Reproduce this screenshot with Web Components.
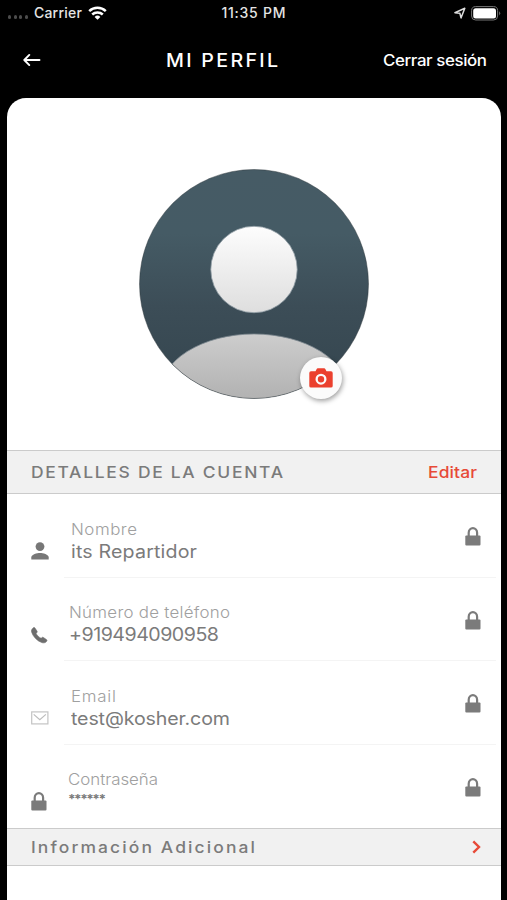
<!DOCTYPE html>
<html lang="es">
<head>
<meta charset="utf-8">
<title>Mi perfil</title>
<style>
body{margin:0;background:#000;font-family:Inter,"Liberation Sans",sans-serif;overflow:hidden}
</style>
</head>
<body>
<profile-screen></profile-screen>
<script>
const define=(name,html,setup)=>customElements.define(name,class extends HTMLElement{
  connectedCallback(){
    if(this.shadowRoot)return;
    const t=document.createElement('template');
    t.innerHTML=typeof html==='function'?html(this):html;
    this.attachShadow({mode:'open'}).append(t.content.cloneNode(true));
    if(setup)setup(this);
  }
});

/* One line of text, slightly widened and tracked out to the given width. */
define('text-run','<style>:host{display:block;white-space:nowrap;flex:none}span{display:inline-block;transform-origin:0 50%}</style><span><slot></slot></span>',el=>{
  const w=+el.getAttribute('w'),n=el.textContent.length,s=el.shadowRoot.querySelector('span');
  const k=+(el.getAttribute('stretch')||1.09);
  s.style.letterSpacing='0px';
  const natural=s.getBoundingClientRect().width;
  s.style.letterSpacing=((w/k-natural)/(n-1)).toFixed(3)+'px';
  s.style.transform=`scaleX(${k})`;
  el.style.width=w+'px';
});

const icons={
  wifi:[19,14,'<g fill="none" stroke="#fff" stroke-width="2.5"><path d="M1.2 5.1a12 12 0 0 1 16.6 0"/><path d="M4.2 8.5a7.7 7.7 0 0 1 10.6 0"/></g><path d="M9.5 13.8 6.6 10.9a4.2 4.2 0 0 1 5.8 0z" fill="#fff"/>'],
  location:[12,12,'<path d="M.9 5.700 10.800 1.200 7 10.900 5.900 6.300z" fill="none" stroke="#ddd" stroke-width="1.500" stroke-linejoin="round"/>'],
  battery:[30,15,'<rect x=".6" y=".6" width="26" height="13.4" rx="4" fill="none" stroke="#777" stroke-width="1"/><rect x="2.2" y="2.2" width="22.8" height="10.2" rx="2.5" fill="#fff"/><path d="M28.2 5.2q2 2 0 4.2z" fill="#777"/>'],
  back:[18,14,'<path d="M6.300 1.900 1.300 7 6.300 12.100M1.500 7H16.500" fill="none" stroke="#fff" stroke-width="1.9" stroke-linecap="round" stroke-linejoin="round"/>'],
  person:[18,18,'<circle cx="9" cy="4.6" r="4.4" fill="#777"/><path d="M.3 17.600v-2.200c0-3 5.800-4.400 8.700-4.400s8.700 1.400 8.700 4.400v2.200z" fill="#777"/>'],
  phone:[17,17,'<path d="M3.900 .9 6 4.100c.5.900.1 1.400-.9 2.300.9 1.900 2.900 3.900 5 4.900.9-1 1.500-1.300 2.300-.8l3 2c.8.500.700 1.200.1 1.900-1.200 1.400-2.800 1.800-4.700 1.200C6.300 14 2.200 9.900.7 5.300.100 3.500.700 2 2.100.9c.7-.5 1.400-.6 1.800 0z" fill="#6e6e6e" stroke="#6e6e6e" stroke-width=".6"/>'],
  mail:[18,14,'<rect x=".7" y=".9" width="16.2" height="12" fill="none" stroke="#c4c4c4" stroke-width="1.2"/><path d="M2.700 3.400 8.800 8.800 14.900 3.400" fill="none" stroke="#bdbdbd" stroke-width="1.2"/>'],
  lock:[16,19,'<path d="M3.700 9V5.700a4.200 4.600 0 0 1 8.400 0V9" fill="none" stroke="#7b7b7b" stroke-width="2.200"/><rect x=".3" y="8.400" width="15.200" height="10" rx="1" fill="#7b7b7b"/>'],
  camera:[24,20,'<path fill-rule="evenodd" d="M2 3.200H6.500L7.700 1Q8 .3 8.800 .3h6.400q.8 0 1.100 .7l1.200 2.200H22q1.700 0 1.700 1.700v13q0 1.700-1.700 1.700H2q-1.700 0-1.700-1.700V4.900Q.3 3.200 2 3.200zM12 5.700a5.500 5.500 0 1 0 0 11 5.500 5.500 0 1 0 0-11zm0 2.300a3.200 3.200 0 1 1 0 6.400 3.200 3.200 0 1 1 0-6.400z" fill="#eb402e"/>'],
  next:[9,14,'<path d="M1.300 1.400 7 7l-5.700 5.600" fill="none" stroke="#e74a38" stroke-width="2.400"/>']
};
define('ui-icon',el=>{
  const [w,h,s]=icons[el.getAttribute('name')];
  return `<style>:host{display:block;flex:none;width:${w}px;height:${h}px}svg{display:block}</style><svg width="${w}" height="${h}" viewBox="0 0 ${w} ${h}">${s}</svg>`;
});

define('status-bar',`<style>
:host{display:grid;grid-template-columns:1fr auto 1fr;height:26px;align-items:center;color:#e4e4e4;font-size:14px;font-weight:500;line-height:26px}
.l,.r{display:flex;align-items:center}
.l{padding-left:8px}.r{justify-content:flex-end;padding-right:6px;gap:5px}
.dots{display:flex;gap:2.400px;margin:8px 6px 0 0}
i{width:3.200px;height:3.200px;border-radius:50%;background:#4c4c4c}
.l ui-icon{margin:-1px 0 0 6px}
</style>
<div class="l"><div class="dots"><i></i><i></i><i></i><i></i></div><text-run w="48" stretch="1">Carrier</text-run><ui-icon name="wifi"></ui-icon></div>
<text-run w="64" stretch="1">11:35 PM</text-run>
<div class="r"><ui-icon name="location"></ui-icon><ui-icon name="battery"></ui-icon></div>`);

define('nav-bar',`<style>
:host{display:grid;grid-template-columns:143px 1fr auto;align-items:center;height:72px;padding:0 20px 4px 23px;box-sizing:border-box;color:#fff}
.t{font-size:18px;font-weight:500}
.a{font-size:15.500px;font-weight:500;justify-self:end}
</style>
<ui-icon name="back"></ui-icon><text-run class="t" w="112">MI PERFIL</text-run><text-run class="a" w="104">Cerrar sesión</text-run>`);

define('profile-avatar',`<style>
:host{display:block;position:relative;width:232px;height:232px}
svg{display:block}
.cam{position:absolute;left:162px;top:189px;width:42px;height:42px;border-radius:50%;background:#fbfbfb;box-shadow:1px 2px 5px rgba(0,0,0,.38);display:grid;place-items:center}
</style>
<svg width="232" height="232" viewBox="0 0 232 232">
<defs>
<linearGradient id="b" x2="0" y2="1"><stop offset="0" stop-color="#465b65"/><stop offset=".28" stop-color="#455b65"/><stop offset=".6" stop-color="#3c4d57"/><stop offset="1" stop-color="#34454e"/></linearGradient>
<linearGradient id="h" x2="0" y2="1"><stop offset="0" stop-color="#fdfdfd"/><stop offset="1" stop-color="#dedede"/></linearGradient>
<linearGradient id="s" x2="0" y2="1"><stop offset="0" stop-color="#cdcdcd"/><stop offset=".5" stop-color="#b4b4b4"/><stop offset="1" stop-color="#acacac"/></linearGradient>
<clipPath id="c"><circle cx="116" cy="116" r="114.500"/></clipPath>
</defs>
<circle cx="116" cy="116" r="114.500" fill="url(#b)"/>
<ellipse cx="116" cy="225" rx="94" ry="59" fill="url(#s)" stroke="#7d8990" stroke-width=".8" clip-path="url(#c)"/>
<circle cx="116" cy="101.500" r="43.200" fill="url(#h)" stroke="#8f9ca3" stroke-width=".8"/>
<circle cx="116" cy="116" r="114.500" fill="none" stroke="#2b3438" stroke-opacity=".45" stroke-width="1"/>
</svg>
<div class="cam"><ui-icon name="camera"></ui-icon></div>`);

define('section-bar',`<style>
:host{display:flex;align-items:center;justify-content:space-between;box-sizing:border-box;background:#f1f1f1;border:solid #cbcbcb;border-width:1px 0;padding:0 24px;color:#7b7b7b;font-size:16px;font-weight:500}
</style><slot></slot><slot name="action"></slot>`);

define('field-row',`<style>
:host{display:flex;height:83.500px;padding-left:24px;box-sizing:border-box}
.i{width:33px;flex:none;padding-top:var(--icon-top,48px);box-sizing:border-box}
.b{flex:1;display:flex;justify-content:space-between;border-bottom:1px solid var(--line,#f4f4f4);margin-right:5px;padding-right:15px}
.t{padding:var(--text-top,25px) 0 0 var(--inset,7px)}
::slotted([slot=label]){font-size:15.500px;font-weight:300;color:#a0a0a0;line-height:22px}
::slotted([slot=value]){font-size:18px;font-weight:400;color:#7b7b7b;line-height:22px}
.lock{padding-top:33px}
</style>
<div class="i"><slot name="icon"></slot></div>
<div class="b"><div class="t"><slot name="label"></slot><slot name="value"></slot></div><div class="lock"><ui-icon name="lock"></ui-icon></div></div>`);

define('profile-screen',`<style>
:host{display:flex;flex-direction:column;width:507px;height:900px;background:#000;overflow:hidden}
main{margin:0 6px 0 7px;flex:1;background:#fff;border-radius:19px 19px 0 0;min-height:0}
.photo{height:352px;box-sizing:border-box;display:flex;justify-content:center;padding-top:69.500px}
.details{height:44px}.extra{height:38px}
.edit{color:#e74a38;font-size:16px}
</style>
<status-bar></status-bar>
<nav-bar></nav-bar>
<main>
<div class="photo"><profile-avatar></profile-avatar></div>
<section-bar class="details"><text-run w="252">DETALLES DE LA CUENTA</text-run><text-run class="edit" slot="action" w="49">Editar</text-run></section-bar>
<field-row><ui-icon slot="icon" name="person"></ui-icon><text-run slot="label" w="66">Nombre</text-run><text-run slot="value" w="126">its Repartidor</text-run></field-row>
<field-row style="--inset:5px;--text-top:24px;--icon-top:49px"><ui-icon slot="icon" name="phone"></ui-icon><text-run slot="label" w="161">Número de teléfono</text-run><text-run slot="value" w="150">+919494090958</text-run></field-row>
<field-row><ui-icon slot="icon" name="mail" style="padding-top:2px"></ui-icon><text-run slot="label" w="45">Email</text-run><text-run slot="value" w="159">test@kosher.com</text-run></field-row>
<field-row style="--inset:4px;--text-top:24px;--icon-top:47px;--line:transparent"><ui-icon slot="icon" name="lock"></ui-icon><text-run slot="label" w="90">Contraseña</text-run><text-run slot="value" w="38" style="font-size:12.500px;font-weight:700;line-height:18px">******</text-run></field-row>
<section-bar class="extra"><text-run w="224">Información Adicional</text-run><ui-icon slot="action" name="next" style="margin-right:-4px"></ui-icon></section-bar>
</main>`);
</script>
</body>
</html>
